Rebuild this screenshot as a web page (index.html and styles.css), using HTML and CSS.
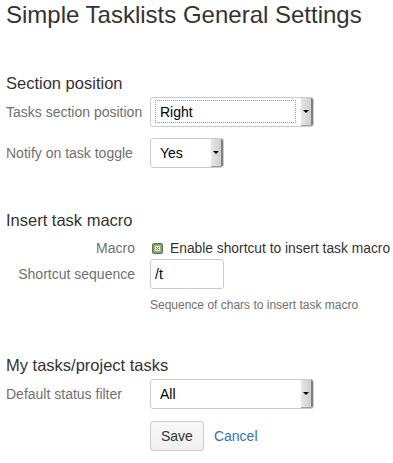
FILE: index.html
```html
<!DOCTYPE html>
<html lang="en">
<head>
    <meta charset="UTF-8">
    <meta name="viewport" content="width=device-width, initial-scale=1.0">
    <title>Simple Tasklists General Settings</title>
    <link rel="stylesheet" href="styles.css">
</head>
<body>
    <h1 class="page-title">Simple Tasklists General Settings</h1>

    <form class="settings-form" onsubmit="return false;">
        <!-- Section position -->
        <div class="settings-group first">
            <h2>Section position</h2>
            <div class="field-row">
                <label for="sectionPosition">Tasks section position</label>
                <div class="select-wrap wide focused">
                    <select id="sectionPosition">
                        <option>Right</option>
                        <option>Left</option>
                        <option>Bottom</option>
                    </select>
                    <span class="select-arrow"></span>
                </div>
            </div>
            <div class="field-row spaced">
                <label for="notifyToggle">Notify on task toggle</label>
                <div class="select-wrap narrow">
                    <select id="notifyToggle">
                        <option>Yes</option>
                        <option>No</option>
                    </select>
                    <span class="select-arrow"></span>
                </div>
            </div>
        </div>

        <!-- Insert task macro -->
        <div class="settings-group">
            <h2>Insert task macro</h2>
            <div class="field-row right-labels check-row">
                <label>Macro</label>
                <label class="checkbox">
                    <svg width="11" height="11" viewBox="0 0 11 11">
                        <rect x="0.5" y="0.5" width="10" height="10" rx="1" fill="#7f9a6c" stroke="#5d7a4c"/>
                        <rect x="2.5" y="2.5" width="6" height="6" fill="#e9eee4" stroke="#9cb08c"/>
                        <path d="M3.8 3.8 L7.2 7.2 M7.2 3.8 L3.8 7.2" stroke="#6a7f5a" stroke-width="1"/>
                    </svg>
                    Enable shortcut to insert task macro
                </label>
            </div>
            <div class="field-row right-labels">
                <label for="shortcut">Shortcut sequence</label>
                <input type="text" id="shortcut" value="/t">
            </div>
            <div class="field-row">
                <span></span>
                <div class="help">Sequence of chars to insert task macro</div>
            </div>
        </div>

        <!-- My tasks/project tasks -->
        <div class="settings-group">
            <h2>My tasks/project tasks</h2>
            <div class="field-row">
                <label for="statusFilter">Default status filter</label>
                <div class="select-wrap wide">
                    <select id="statusFilter">
                        <option>All</option>
                        <option>Open</option>
                        <option>Done</option>
                    </select>
                    <span class="select-arrow"></span>
                </div>
            </div>
            <div class="field-row buttons">
                <span></span>
                <div class="button-group">
                    <button type="submit">Save</button>
                    <a href="#" class="cancel">Cancel</a>
                </div>
            </div>
        </div>
    </form>
</body>
</html>
```

FILE: styles.css
```css
body {
    margin: 0;
    padding: 0 6px;
    font-family: "Liberation Sans", Arial, sans-serif;
    font-size: 14px;
    color: #333;
    background-color: #fff;
}
.page-title {
    margin: 0;
    font-size: 24px;
    font-weight: normal;
    line-height: 30px;
    color: #333;
}
.settings-group {
    margin-top: 40px;
}
.settings-group.first {
    margin-top: 41px;
}
.settings-group h2 {
    margin: 0 0 2px;
    font-size: 16.5px;
    font-weight: normal;
    line-height: 24px;
    color: #333;
}
.field-row {
    display: grid;
    grid-template-columns: 144px 1fr;
    align-items: center;
}
.field-row.spaced {
    margin-top: 11px;
}
.field-row label {
    color: #707070;
    white-space: nowrap;
}
.right-labels > label:first-child {
    text-align: right;
    padding-right: 15px;
}
.check-row {
    margin-top: 6px;
    margin-bottom: 1px;
    height: 20px;
}
.field-row .checkbox {
    display: flex;
    align-items: center;
    gap: 7px;
    padding-left: 2px;
    color: #333;
    font-size: 13.8px;
}
.checkbox svg {
    display: block;
    flex-shrink: 0;
}
.select-wrap {
    position: relative;
    height: 30px;
}
.select-wrap.wide {
    width: 164px;
}
.select-wrap.narrow {
    width: 74px;
}
.select-wrap select {
    appearance: none;
    -webkit-appearance: none;
    box-sizing: border-box;
    width: 100%;
    height: 30px;
    padding: 0 16px 0 9px;
    border: 1px solid #ccc;
    border-radius: 3px;
    background-color: #fff;
    font-family: inherit;
    font-size: 14px;
    color: #000;
}
.select-arrow {
    position: absolute;
    top: 1px;
    right: 1px;
    bottom: 1px;
    width: 10px;
    border-right: 2px solid #808080;
    border-bottom: 1px solid #a0a0a0;
    border-radius: 0 2px 2px 0;
    background: linear-gradient(to right, #e6e6e6, #cfcfcf);
    pointer-events: none;
}
.select-arrow::after {
    content: "";
    position: absolute;
    left: 2px;
    top: 12px;
    border-left: 3px solid transparent;
    border-right: 3px solid transparent;
    border-top: 3px solid #000;
}
/* dotted focus box of the active select */
.select-wrap.focused::before {
    content: "";
    position: absolute;
    left: 5px;
    top: 3px;
    right: 18px;
    bottom: 4px;
    border: 1px dotted #9a9a9a;
    pointer-events: none;
}
input[type="text"] {
    box-sizing: border-box;
    width: 74px;
    height: 30px;
    padding: 0 4px;
    border: 1px solid #ccc;
    border-radius: 3px;
    font-family: inherit;
    font-size: 14px;
    color: #000;
}
.help {
    margin-top: 9px;
    font-size: 12px;
    line-height: 15px;
    color: #707070;
}
.buttons {
    margin-top: 12px;
}
.button-group {
    display: flex;
    align-items: center;
    gap: 10px;
}
button {
    box-sizing: border-box;
    height: 30px;
    padding: 0 10px;
    border: 1px solid #ccc;
    border-radius: 3px;
    background: linear-gradient(#f7f7f7, #f0f0f0);
    font-family: inherit;
    font-size: 14px;
    color: #333;
}
.cancel {
    color: #3572b0;
    text-decoration: none;
}
```
